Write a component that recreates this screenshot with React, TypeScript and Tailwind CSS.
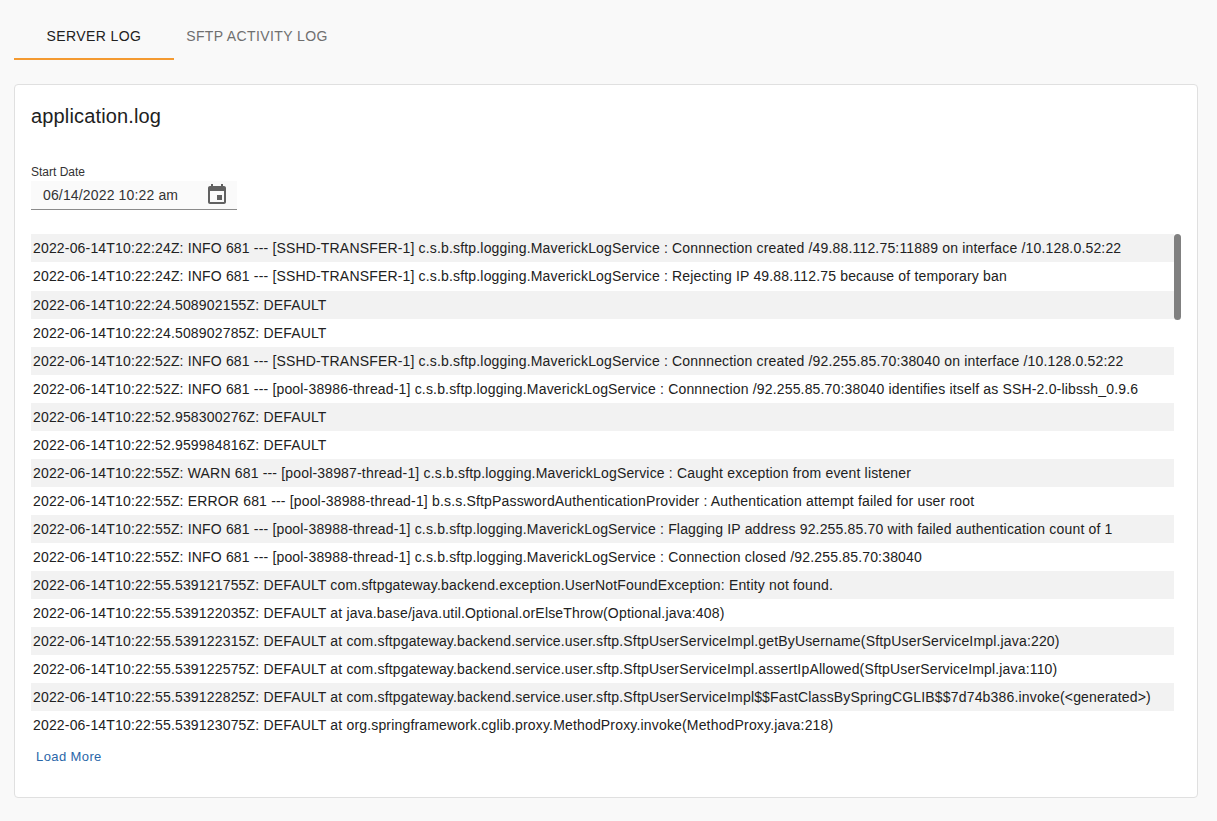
const logLines = [
  '2022-06-14T10:22:24Z: INFO 681 --- [SSHD-TRANSFER-1] c.s.b.sftp.logging.MaverickLogService : Connnection created /49.88.112.75:11889 on interface /10.128.0.52:22',
  '2022-06-14T10:22:24Z: INFO 681 --- [SSHD-TRANSFER-1] c.s.b.sftp.logging.MaverickLogService : Rejecting IP 49.88.112.75 because of temporary ban',
  '2022-06-14T10:22:24.508902155Z: DEFAULT',
  '2022-06-14T10:22:24.508902785Z: DEFAULT',
  '2022-06-14T10:22:52Z: INFO 681 --- [SSHD-TRANSFER-1] c.s.b.sftp.logging.MaverickLogService : Connnection created /92.255.85.70:38040 on interface /10.128.0.52:22',
  '2022-06-14T10:22:52Z: INFO 681 --- [pool-38986-thread-1] c.s.b.sftp.logging.MaverickLogService : Connnection /92.255.85.70:38040 identifies itself as SSH-2.0-libssh_0.9.6',
  '2022-06-14T10:22:52.958300276Z: DEFAULT',
  '2022-06-14T10:22:52.959984816Z: DEFAULT',
  '2022-06-14T10:22:55Z: WARN 681 --- [pool-38987-thread-1] c.s.b.sftp.logging.MaverickLogService : Caught exception from event listener',
  '2022-06-14T10:22:55Z: ERROR 681 --- [pool-38988-thread-1] b.s.s.SftpPasswordAuthenticationProvider : Authentication attempt failed for user root',
  '2022-06-14T10:22:55Z: INFO 681 --- [pool-38988-thread-1] c.s.b.sftp.logging.MaverickLogService : Flagging IP address 92.255.85.70 with failed authentication count of 1',
  '2022-06-14T10:22:55Z: INFO 681 --- [pool-38988-thread-1] c.s.b.sftp.logging.MaverickLogService : Connection closed /92.255.85.70:38040',
  '2022-06-14T10:22:55.539121755Z: DEFAULT com.sftpgateway.backend.exception.UserNotFoundException: Entity not found.',
  '2022-06-14T10:22:55.539122035Z: DEFAULT at java.base/java.util.Optional.orElseThrow(Optional.java:408)',
  '2022-06-14T10:22:55.539122315Z: DEFAULT at com.sftpgateway.backend.service.user.sftp.SftpUserServiceImpl.getByUsername(SftpUserServiceImpl.java:220)',
  '2022-06-14T10:22:55.539122575Z: DEFAULT at com.sftpgateway.backend.service.user.sftp.SftpUserServiceImpl.assertIpAllowed(SftpUserServiceImpl.java:110)',
  '2022-06-14T10:22:55.539122825Z: DEFAULT at com.sftpgateway.backend.service.user.sftp.SftpUserServiceImpl$$FastClassBySpringCGLIB$$7d74b386.invoke(<generated>)',
  '2022-06-14T10:22:55.539123075Z: DEFAULT at org.springframework.cglib.proxy.MethodProxy.invoke(MethodProxy.java:218)',
];

function CalendarIcon() {
  return (
    <svg className="h-6 w-6 text-[#616161]" viewBox="0 0 24 24" fill="currentColor">
      <path d="M17 12h-5v5h5v-5zM16 1v2H8V1H6v2H5c-1.11 0-1.99.9-1.99 2L3 19c0 1.1.89 2 2 2h14c1.1 0 2-.9 2-2V5c0-1.1-.9-2-2-2h-1V1h-2zm3 18H5V8h14v11z" />
    </svg>
  );
}

export default function App() {
  return (
    <div className="min-h-[821px] bg-[#f9f9f9] pl-[14px] pr-[19px] pt-[12px] font-['Liberation_Sans',Arial,sans-serif]">
      {/* Tabs */}
      <div className="flex h-[48px] text-[14px] uppercase tracking-[0.4px]">
        <div className="flex w-[160px] items-center justify-center border-b-2 border-[#f49a31] pt-[2px] text-[#212121]">
          Server Log
        </div>
        <div className="flex w-[166px] items-center justify-center border-b-2 border-transparent pt-[2px] text-[#6f6f6f]">
          SFTP Activity Log
        </div>
      </div>

      {/* Card */}
      <div className="mt-[24px] h-[714px] rounded-[4px] border border-[#e0e0e0] bg-white px-[16px]">
        <h1 className="pt-[19px] text-[20px] leading-[24px] tracking-[0.15px] text-[#212121]">application.log</h1>

        <div className="mt-[36px] w-[206px]">
          <div className="text-[12px] leading-[16px] text-[#333333]">Start Date</div>
          <div className="mt-px flex h-[29px] items-center justify-between border-b border-[#8a8a8a] bg-[#fafafa] pl-[12px] pr-[8px]">
            <span className="text-[14px] tracking-[0.15px] text-[#333333]">06/14/2022 10:22 am</span>
            <CalendarIcon />
          </div>
        </div>

        {/* Log list */}
        <div className="relative mt-[24.4px] h-[504.6px] overflow-hidden pr-[7px]">
          {logLines.map((line, i) => (
            <div
              key={line}
              className={`flex h-[28.07px] items-center whitespace-nowrap pl-[2px] pt-[0.94px] text-[14px] tracking-[0.17px] text-[#212121] ${
                i % 2 === 0 ? 'bg-[#f2f2f2]' : 'bg-white'
              }`}
            >
              {line}
            </div>
          ))}
          <div className="absolute right-0 top-0 h-[86px] w-[7px] rounded-[4px] bg-[#808080]" />
        </div>

        <button className="mt-[8px] pl-[5px] text-[13px] leading-[20px] tracking-[0.4px] text-[#2a66a8]">
          Load More
        </button>
      </div>
    </div>
  );
}
